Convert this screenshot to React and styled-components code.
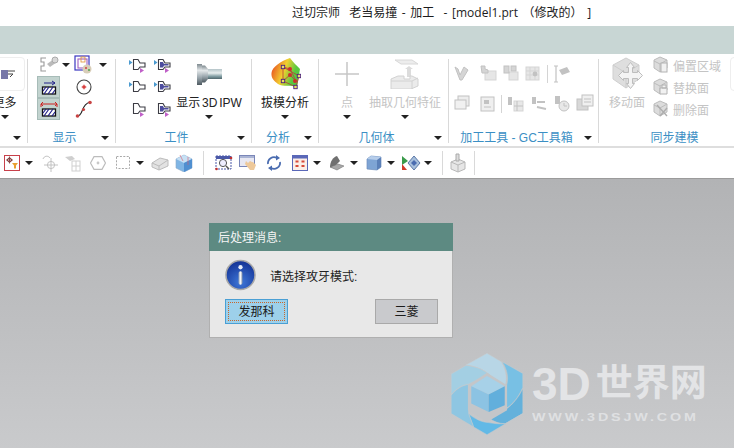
import styled, { createGlobalStyle } from "styled-components";

const GlobalStyle = createGlobalStyle`
  html, body { margin: 0; padding: 0; background: #fff; overflow: hidden; }
  body { font-family: "Liberation Sans", "Noto Sans CJK SC", sans-serif; font-size: 12px; color: #222; }
  svg { display: block; }
`;

const Page = styled.div`
  width: 734px;
  height: 448px;
  display: flex;
  flex-direction: column;
  overflow: hidden;
  position: relative;
`;

const TitleBar = styled.div`
  height: 26px;
  padding-left: 292px;
  line-height: 25px;
  white-space: pre;
  word-spacing: 1.5px;
  font-family: "Open Sans", "Noto Sans CJK SC", sans-serif;
  color: #1c1c1c;
`;

const Strip = styled.div`
  height: 28px;
  background: #c8d6d4;
`;

const Ribbon = styled.div`
  height: 92px;
  display: flex;
  overflow: hidden;
  border-bottom: 2px solid #dedede;
`;

const Group = styled.div`
  width: ${(p) => p.$w}px;
  flex: none;
  display: flex;
  flex-direction: column;
  overflow: hidden;
`;

const Divider = styled.div`
  width: 1px;
  height: 84px;
  margin-top: 5px;
  flex: none;
  background: #d9d9d9;
`;

const GroupBody = styled.div`
  height: 76px;
  display: flex;
  padding-left: ${(p) => p.$pl || 0}px;
  justify-content: ${(p) => (p.$center ? "center" : "flex-start")};
`;

const Footer = styled.div`
  height: 16px;
  display: flex;
  align-items: center;
  padding-left: ${(p) => p.$pl || 0}px;
  padding-right: 6px;
`;

const GroupLabel = styled.div`
  flex: 1;
  text-align: center;
  color: #3b8fc4;
  line-height: 16px;
  white-space: nowrap;
`;

const Caret = styled.i`
  display: block;
  flex: none;
  width: 0;
  height: 0;
  border-left: 4px solid transparent;
  border-right: 4px solid transparent;
  border-top: 4px solid #222;
`;

const CaretCell = styled.div`
  width: ${(p) => p.$w || 10}px;
  height: ${(p) => p.$h || 22}px;
  margin-left: ${(p) => p.$ml || 0}px;
  flex: none;
  display: flex;
  align-items: center;
  justify-content: center;
`;

const BigButton = styled.div`
  width: ${(p) => p.$w}px;
  flex: none;
  display: flex;
  flex-direction: column;
  align-items: center;
`;

const BigIcon = styled.div`
  height: 40px;
  display: flex;
  align-items: center;
  justify-content: center;
`;

const BigText = styled.div`
  height: 16px;
  line-height: 18px;
  white-space: nowrap;
  word-spacing: -1.5px;
  margin-left: ${(p) => p.$ml || 0}px;
  color: ${(p) => (p.$off ? "#c4c4c4" : "#222")};
`;

const StubBox = styled.div`
  width: 32px;
  height: 34px;
  box-sizing: border-box;
  margin: 3px 0 3px ${(p) => p.$ml || 0}px;
  border: 1px solid #eee;
  border-radius: 4px;
  display: flex;
  align-items: center;
  justify-content: flex-end;
  padding-right: 9px;
  flex: none;
`;

const ShowGrid = styled.div`
  display: grid;
  grid-template-columns: 23px 12px 24px 14px;
  grid-auto-rows: 22px;
  margin-left: 9px;
  height: 66px;
`;

const Cell = styled.div`
  display: flex;
  align-items: center;
  justify-content: center;
`;

const ToggleCell = styled(Cell)`
  background: #c2d3cf;
  border: 1px solid #a7bcb8;
  box-sizing: border-box;
`;

const IconGrid = styled.div`
  display: grid;
  grid-template-columns: 25px 25px;
  grid-auto-rows: 22px;
  margin-left: 9px;
  height: 66px;
`;

const ToolRows = styled.div`
  display: flex;
  flex-direction: column;
  padding-top: 5px;
`;

const ToolRow = styled.div`
  height: 30px;
  display: flex;
  align-items: center;
`;

const ToolCell = styled.div`
  width: 22px;
  flex: none;
  margin-left: ${(p) => p.$ml || 0}px;
  display: flex;
  justify-content: center;
`;

const MiniSep = styled.div`
  width: 1px;
  height: 18px;
  flex: none;
  margin-left: ${(p) => p.$ml || 0}px;
  background: #d4d4d4;
`;

const SyncList = styled.div`
  display: flex;
  flex-direction: column;
`;

const SyncRow = styled.div`
  height: 22px;
  display: flex;
  align-items: center;
  gap: 4px;
  color: #c4c4c4;
  white-space: nowrap;
`;

const Toolbar = styled.div`
  height: 30px;
  display: flex;
  align-items: center;
  border-bottom: 1px solid #9b9b9b;
  padding-left: 2px;
  flex: none;
`;

const ToolGroup = styled.div`
  display: flex;
  align-items: center;
`;

const ToolSlot = styled.div`
  width: 20px;
  flex: none;
  margin-left: ${(p) => p.$ml || 0}px;
  display: flex;
  justify-content: center;
`;

const ToolSep = styled.div`
  width: 1px;
  height: 24px;
  flex: none;
  margin-left: ${(p) => p.$ml || 0}px;
  background: #d9d9d9;
`;

const Canvas = styled.div`
  flex: 1;
  background: linear-gradient(#b2b3b5, #c9cacc);
`;

const Dialog = styled.div`
  position: absolute;
  left: 209px;
  top: 223px;
  width: 244px;
  height: 115px;
  box-sizing: border-box;
  border: 1px solid #b0b0b0;
  border-top: none;
  background: #e8e8e8;
  display: flex;
  flex-direction: column;
`;

const DialogHead = styled.div`
  height: 28px;
  margin: 0 -1px;
  padding-left: 9px;
  background: #5d8a82;
  color: #f4f4f4;
  line-height: 30px;
`;

const DialogBody = styled.div`
  display: flex;
  align-items: center;
  height: 48px;
  padding-left: 15px;
  gap: 14px;
`;

const DialogActions = styled.div`
  display: flex;
  justify-content: space-between;
  padding: 0 14px 0 15px;
`;

const DialogButton = styled.div`
  width: 63px;
  height: 25px;
  box-sizing: border-box;
  border: 1px solid ${(p) => (p.$focus ? "#4a9fd4" : "#a9a9a9")};
  background: ${(p) => (p.$focus ? "#9dd0ea" : "#c9cacd")};
  color: #1c1c1c;
  padding: 2px;
  text-align: center;
  & > span {
    display: block;
    height: 19px;
    border: 1px dotted ${(p) => (p.$focus ? "#c8662a" : "transparent")};
    box-sizing: border-box;
    line-height: 19px;
  }
`;

const Watermark = styled.div`
  position: absolute;
  left: 451px;
  top: 353px;
  display: flex;
  gap: 9px;
`;

const MarkText = styled.div`
  display: flex;
  flex-direction: column;
  color: #e3e4e6;
  width: 180px;
`;

const MarkTitle = styled.div`
  font-weight: 700;
  font-size: 37px;
  line-height: 44px;
  margin-top: 9px;
  white-space: nowrap;
  display: flex;
  align-items: center;
  gap: 5px;
  & > b {
    font-size: 46px;
    letter-spacing: 0;
  }
`;

const MarkUrl = styled.div`
  font-weight: 700;
  font-size: 11px;
  line-height: 12px;
  letter-spacing: 2.2px;
  margin-top: 5px;
  color: #dfe0e2;
  white-space: nowrap;
  transform: scaleX(1.3);
  transform-origin: left;
`;

const Ic = ({ w = 20, h = 20, vb, children }) => (
  <svg width={w} height={h} viewBox={vb || `0 0 ${w} ${h}`} fill="none">{children}</svg>
);

const Cutter = ({ fill, left, right }) => (
  <Ic w={18} h={16}>
    {left && <path d="M0 3l3.500 2.500L0 8z" fill="#4a9ad0" />}
    {right && <path d="M11 11l4 2.500-4 2.500z" fill="#c060c8" />}
    <path d="M4.500 2.500H9l2 3.500h5v4h-5l-2 2.500H4.500z" fill="#fff" stroke="#3c3c44" strokeWidth="1.100" />
    {fill && <path d="M6 5h3l1 2h4.500v1.600H10L9 10.500H6z" fill="#4d4d9e" />}
  </Ic>
);

const Screw = () => (
  <Ic>
    <path d="M7 3H2v4h3v4H2v5h5" stroke="#9a9a9a" strokeWidth="1.100" />
    <path d="M8 9l7-5 3 3-7 5z" fill="#bbb" />
    <circle cx="16" cy="5" r="3" fill="#d8d8d8" stroke="#aaa" />
  </Ic>
);

const ColorSquares = () => (
  <Ic>
    <rect x="1" y="1" width="14" height="14" stroke="#3a36c0" strokeWidth="1.200" />
    <rect x="4" y="4" width="9" height="9" stroke="#a060c0" strokeWidth="1.100" />
    <rect x="7" y="2" width="4" height="5" stroke="#e09030" strokeWidth="0.800" />
    <circle cx="13" cy="14" r="4.500" fill="#d8cdb8" />
    <circle cx="12" cy="13" r="1" fill="#d04040" />
    <circle cx="15" cy="15" r="1" fill="#50a050" />
  </Ic>
);

const CirclePoint = () => (
  <Ic w={16} h={16}>
    <circle cx="8" cy="8" r="7" fill="#fff" stroke="#444" strokeWidth="1.100" />
    <circle cx="8" cy="8" r="1.800" fill="#d94040" />
    <path d="M8 5.500v5M5.500 8h5" stroke="#d94040" strokeWidth=".7" />
  </Ic>
);

const Spline = () => (
  <Ic w={18} h={18}>
    <path d="M2 16c7 0 3-11 13-14" stroke="#222" strokeWidth="1.100" />
    <circle cx="2.500" cy="16" r="1.800" fill="#c84444" />
    <circle cx="15" cy="2.500" r="1.800" fill="#c84444" />
    <circle cx="8.500" cy="9.500" r="1.600" fill="#c84444" />
  </Ic>
);

const Hatch = ({ dbl }) => (
  <Ic w={18} h={18}>
    <rect x="2.500" y="9" width="13" height="7" fill="#fff" stroke="#111" strokeWidth="1.300" />
    <path d="M4 16l5-7M8 16l5-7M12 16l3-4M3 13l3-4" stroke="#22228a" strokeWidth="1.200" />
    {dbl ? (
      <path d="M1 4h16M1 4l2-2M1 4l2 2M17 4l-2-2M17 4l-2 2M1 4v3M17 4v3" stroke="#cc2222" strokeWidth="1" />
    ) : (
      <path d="M4 5h11M15 5l-3-2M15 5l-3 2" stroke="#22228a" strokeWidth="1" />
    )}
  </Ic>
);

const BigTool = () => (
  <svg width="25" height="21" viewBox="0 0 25 21">
    <defs>
      <linearGradient id="tg" x1="0" y1="0" x2="0" y2="1">
        <stop offset="0" stopColor="#7f8a90" />
        <stop offset=".3" stopColor="#e4e8ea" />
        <stop offset=".65" stopColor="#9aa6ad" />
        <stop offset="1" stopColor="#4e5a61" />
      </linearGradient>
      <linearGradient id="tn" x1="0" y1="0" x2="0" y2="1">
        <stop offset="0" stopColor="#b4c4c8" />
        <stop offset=".4" stopColor="#e8eeee" />
        <stop offset=".75" stopColor="#7e9aa0" />
        <stop offset="1" stopColor="#4f666c" />
      </linearGradient>
    </defs>
    <rect x="0" y="0" width="5" height="21" fill="url(#tg)" />
    <path d="M5 1.500h3l3 3.500v10l-3 3.500H5z" fill="url(#tg)" />
    <rect x="11" y="5" width="14" height="10" fill="url(#tn)" />
  </svg>
);

const DraftIcon = () => (
  <svg width="32" height="32" viewBox="0 0 32 32" fill="none">
    <defs>
      <linearGradient id="dg" x1="0" y1=".25" x2="1" y2=".6">
        <stop offset="0" stopColor="#e84a20" />
        <stop offset=".45" stopColor="#f2d030" />
        <stop offset=".8" stopColor="#58c840" />
      </linearGradient>
    </defs>
    <path d="M21 0c3 4 7 8 10 11l-3 18c-6-2-14 0-19-3-4-3-7-6-6.500-11C3 9 12 3 21 0z" fill="url(#dg)" />
    <path d="M14 9l16 9-3 11L14 23zM14 9l7 2 6 12M14 23l7-6 6 6" stroke="#b83838" strokeWidth=".8" />
    {[[21, 11], [21, 17], [26, 23]].map(([x, y]) => <circle key={x + y} cx={x} cy={y} r="2" fill="#d02c2c" />)}
    {[[14, 9], [30, 18], [14, 23], [26.5, 29]].map(([x, y]) => (
      <rect key={x + y} x={x - 1.7} y={y - 1.7} width="3.400" height="3.400" fill="#e8e060" stroke="#4a2080" strokeWidth=".9" />
    ))}
  </svg>
);

const PlusIcon = () => (
  <Ic w={24} h={24}>
    <path d="M12 0v24M0 12h24" stroke="#c6c6c6" strokeWidth="1.500" />
  </Ic>
);

const ExtractIcon = () => (
  <Ic w={30} h={30}>
    <path d="M5 1h17l6 4H11z" fill="#ededed" stroke="#d8d8d8" />
    <path d="M15 10l4-3 4 3h-2v8h-4v-8z" fill="#dcdcdc" />
    <path d="M1 20l7-3h6v3h6v-3h2l6 3v7l-7 3H1z" fill="#ebebeb" stroke="#d2d2d2" />
    <path d="M1 22h21l6-3M22 22v8" stroke="#d2d2d2" />
  </Ic>
);

const GreyBlock = ({ kind = 0 }) => {
  const a = "#d5d5d5";
  const b = "#c2c2c2";
  const shapes = [
    <path key="0" d="M2 3l3 2 2 6 4-8 4 3-6 10H7z" fill={a} stroke={b} />,
    <g key="1"><rect x="6" y="7" width="11" height="9" fill="#e6e6e6" stroke={a} /><path d="M2 2h4v3l3 1v3H3z" fill={a} stroke={b} /></g>,
    <g key="2"><rect x="8" y="8" width="9" height="8" fill="#e6e6e6" stroke={a} /><rect x="3" y="2" width="5" height="7" fill={a} stroke={b} /><rect x="10" y="2" width="5" height="5" fill={a} stroke={b} /></g>,
    <g key="3"><rect x="3" y="3" width="13" height="13" fill="#e6e6e6" stroke={a} /><path d="M3 7h13M3 11h13M7 3v13M12 3v13" stroke={a} /><circle cx="12" cy="10" r="2.400" fill={b} /></g>,
    <g key="4"><rect x="5" y="2" width="11" height="10" fill="#ededed" stroke={b} /><rect x="2" y="6" width="11" height="9" fill="#f1f1f1" stroke={b} /></g>,
    <g key="5"><rect x="3" y="3" width="13" height="14" fill="#efefef" stroke={b} /><rect x="6" y="6" width="5" height="4" fill={b} /><path d="M6 13h7" stroke={b} /></g>,
    <g key="6"><path d="M2 3h4v8H2z" fill={b} /><rect x="8" y="7" width="9" height="10" fill="#e8e8e8" stroke={a} /><path d="M11 7v10M8 12h9" stroke={b} /></g>,
    <g key="7"><path d="M3 3h4v7H3z" fill={b} /><path d="M8 8h8M8 13l9 2" stroke={b} strokeWidth="2" /></g>,
    <g key="8"><path d="M3 2h5v8H3z" fill={b} /><circle cx="12" cy="12" r="5" fill="#e8e8e8" stroke={b} /><path d="M12 9v3h3" stroke={b} /></g>,
    <g key="9"><rect x="2" y="5" width="11" height="11" fill="#d8d8d8" stroke={b} /><rect x="7" y="1" width="11" height="11" fill="#f0f0f0" stroke={b} /><path d="M9 5h7M9 8h7" stroke={b} /></g>,
    <g key="10"><path d="M4 2v16M2 2h4M2 18h4" stroke={b} strokeWidth="1.200" /><path d="M7 6l8-3 3 5-8 3z" fill={b} /></g>,
  ];
  return <Ic>{shapes[kind]}</Ic>;
};

const MoveFace = () => (
  <Ic w={34} h={34}>
    <path d="M16 1l13 7v14l-13 9L3 22V8z" fill="#dedede" stroke="#cfcfcf" />
    <path d="M3 8l13 8 13-8M16 16v15" stroke="#cdcdcd" />
    <path d="M21 6l4 5h-2v5h5v-2l5 5-5 5v-2h-5v5h2l-4 5-4-5h2v-5h-5v2l-5-5 5-5v2h5v-5h-2z" fill="#f4f4f4" stroke="#bdbdbd" transform="translate(-.5 -.5)" />
  </Ic>
);

const SyncIcon = ({ mark }) => (
  <Ic w={16} h={18}>
    <path d="M7 1l7 3v8l-7 4-6-4V4z" fill="#dcdcdc" stroke="#bcbcbc" />
    <path d="M1 5l6 3 7-4M7 8v8" stroke="#bcbcbc" />
    {mark === 0 && <rect x="8" y="7" width="6" height="9" fill="#f1f1f1" stroke="#b2b2b2" />}
    {mark === 1 && <path d="M7 10h7v6H7zM9 7h4v3H9z" fill="#f1f1f1" stroke="#b2b2b2" />}
    {mark === 2 && <path d="M4 5l10 11M14 8L7 16" stroke="#adadad" strokeWidth="1.400" />}
  </Ic>
);

const RedProbe = () => (
  <Ic w={16} h={16}>
    <rect x=".5" y=".5" width="15" height="15" fill="#fff" stroke="#c8404a" />
    <circle cx="5.500" cy="5" r="2" stroke="#7a3030" />
    <path d="M5.500 1.500v7M2 5h7" stroke="#7a3030" strokeWidth=".8" />
    <path d="M8 8h6l-2 2.500v3h-2v-3z" fill="#e8a030" />
  </Ic>
);

const grey = "#c2c2c2";
const Crosshair = () => (
  <Ic w={20} h={18}>
    <path d="M3 5c1-3 5-4 7-1" stroke={grey} />
    <circle cx="11" cy="11" r="3.600" stroke={grey} />
    <path d="M11 4v14M4 11h14" stroke={grey} />
  </Ic>
);
const Bolts = () => (
  <Ic w={20} h={18}>
    <path d="M2 3l7-1 3 3-5 2z" fill="#cfcfcf" />
    <rect x="9" y="7" width="8" height="10" stroke="#d0d0d0" />
    <path d="M13 7v10M9 12h8" stroke="#d0d0d0" />
  </Ic>
);
const Hexa = () => (
  <Ic w={16} h={14}>
    <path d="M4 .7h8L15.500 7 12 13.300H4L.5 7z" stroke="#bcbcbc" strokeWidth="1.200" />
    <circle cx="8" cy="7" r="1.400" fill="#c8c8c8" />
  </Ic>
);
const DashBox = () => (
  <Ic w={16} h={16}>
    <rect x="1.500" y="1.500" width="13" height="12" stroke="#a8a8a8" strokeDasharray="2 1.400" />
  </Ic>
);
const GreyBox = () => (
  <Ic w={18} h={16}>
    <path d="M1 8l8-5 8 2v6l-9 4-7-3z" fill="#e2e2e2" stroke="#bcbcbc" />
    <path d="M1 8l7 3 9-6M8 11v4" stroke="#bcbcbc" />
  </Ic>
);
const BlueCube = () => (
  <Ic w={18} h={18}>
    <path d="M1 5l8-4 8 4v9l-8 4-8-4z" fill="#7fb5e4" stroke="#8aa8c8" strokeWidth=".6" />
    <path d="M1 5l8 4 8-4-8-4z" fill="#c6e0f4" />
    <path d="M9 9v9l8-4V5z" fill="#4f8fd0" />
    <path d="M5 1l3 6M13 3v8" stroke="#d85c6c" strokeWidth=".6" />
  </Ic>
);
const ZoomFrame = () => (
  <Ic w={18} h={16}>
    <rect x="1" y="1" width="15" height="3" fill="#4a58a8" />
    <rect x="1" y="1" width="15" height="13" stroke="#4a58a8" strokeDasharray="2 1" />
    <circle cx="8" cy="8" r="3.600" stroke="#555" fill="#eef" />
    <path d="M11 11l3 3" stroke="#555" strokeWidth="1.400" />
    <circle cx="1.500" cy="14" r="1.300" fill="#c03030" />
    <circle cx="16" cy="3" r="1.300" fill="#c03030" />
  </Ic>
);
const HandFrame = () => (
  <Ic w={18} h={16}>
    <rect x=".5" y=".5" width="15" height="11" fill="#e8e8f2" stroke="#7a86b8" />
    <rect x="1" y="1" width="14" height="2" fill="#aab4d4" />
    <path d="M7 6l2 2 2-2 2 1 1 0 3 3-2 5H11L6 9z" fill="#eec99a" />
  </Ic>
);
const Refresh = () => (
  <Ic w={16} h={16}>
    <path d="M2 9a6 6 0 0 1 9-6" stroke="#4a6cb0" strokeWidth="1.800" />
    <path d="M14 7a6 6 0 0 1-9 6" stroke="#4a6cb0" strokeWidth="1.800" />
    <path d="M10 0l4 3-4 2.500zM6 10.500l-4 2.500 4 3z" fill="#4a6cb0" />
  </Ic>
);
const ViewGrid = () => (
  <Ic w={16} h={16}>
    <rect x=".5" y=".5" width="15" height="15" fill="#fbeee8" stroke="#5a68b8" />
    <rect x="1" y="1" width="14" height="2.500" fill="#5a68b8" />
    <path d="M3.500 5.500h3v2h-3zM9.500 5.500h3v2h-3zM3.500 10h3v2h-3zM9.500 10h3v2h-3z" fill="#d84a3a" />
  </Ic>
);
const Scanner = () => (
  <Ic w={16} h={16}>
    <path d="M1 12c0-5 3-10 7-11l3 5-7 7z" fill="#707070" />
    <path d="M1 12l8-3 6 2-7 4z" fill="#a8a8a8" stroke="#666" strokeWidth=".5" />
  </Ic>
);
const SolidBox = () => (
  <Ic w={16} h={16}>
    <path d="M1 4l4-3 10 1v10l-4 3-10-1z" fill="#7ea4d4" stroke="#6d8ebc" strokeWidth=".7" />
    <path d="M11 4v11l4-3V2z" fill="#5b80b8" />
    <path d="M1 4l10 1 4-3-10-1z" fill="#b6cdea" />
  </Ic>
);
const Diamonds = () => (
  <Ic w={20} h={16}>
    <path d="M1 1l6 5-6 4z" fill="#3a9a4a" />
    <path d="M1 9l5 6H1z" fill="#d03a2a" />
    <path d="M13 1l6 7-6 7-6-7z" fill="#a8c0dc" stroke="#5a78a8" />
    <path d="M10 8l3-3 3 3-3 3z" fill="#4a6cb0" />
  </Ic>
);
const GreyTool = () => (
  <Ic w={18} h={20}>
    <path d="M2 9l7-3 7 3v7l-7 3-7-3z" fill="#e6e6e6" stroke="#b8b8b8" />
    <path d="M2 9l7 3 7-3M9 12v7" stroke="#b8b8b8" />
    <path d="M7 1h3v7H7z" fill="#ddd" stroke="#aaa" />
  </Ic>
);

const InfoIcon = () => (
  <svg width="31" height="32" viewBox="0 0 32 32" fill="none">
    <defs>
      <radialGradient id="ig" cx=".5" cy=".75" r=".8">
        <stop offset="0" stopColor="#3f77d8" />
        <stop offset="1" stopColor="#0f2c8f" />
      </radialGradient>
      <linearGradient id="ib" x1="0" y1="0" x2="1" y2="0">
        <stop offset="0" stopColor="#9aa6b8" />
        <stop offset=".5" stopColor="#f4f6fa" />
        <stop offset="1" stopColor="#8a96a8" />
      </linearGradient>
    </defs>
    <circle cx="16" cy="16" r="15" fill="url(#ig)" stroke="#a8a8a8" strokeWidth="1.600" />
    <circle cx="16" cy="8" r="2.200" fill="#e8eef8" />
    <rect x="14" y="12" width="4" height="14" rx="2" fill="url(#ib)" />
  </svg>
);

const LogoMark = () => (
  <svg width="72" height="82" viewBox="18 9 214 245" fill="none" stroke="#c8cbcd" strokeWidth="1.500">
    <path d="M62 45L125 10l43 25c17 30 17 55 10 77l-48-40C110 55 85 47 62 45z" fill="#b8d6e6" />
    <path d="M170 35l62 35v42c-12 28-30 50-50 63v-63c8-25 6-50-12-77z" fill="#78c0e4" />
    <path d="M232 115v75l-52 30c-20 0-36-6-50-18l52-25c20-14 38-36 50-62z" fill="#64b1db" />
    <path d="M70 190c18 16 40 26 60 27 20 4 40 4 50 3l52-30-107 63-40-23z" fill="#62b9e6" />
    <path d="M18 190v-55c15-18 32-30 52-32v87l15 40z" fill="#8ec6e2" />
    <path d="M18 72l44-26c24 2 50 10 68 26l-60 30c-20 2-37 14-52 32z" fill="#a3cfe3" />
    <path d="M125 68l60 37v75l-60 35-57-35v-75z" fill="#c4c6c9" stroke="none" />
    <path d="M125 78l53 30-48 25-52-25z" fill="#a7d1e8" stroke="none" />
    <path d="M78 108l52 25v52l-52-25z" fill="#8cc3e3" stroke="none" />
    <path d="M130 133l48-25v57l-48 20z" fill="#62afdc" stroke="none" />
  </svg>
);

const leftTools = [
  { C: RedProbe, caret: true },
  { C: Crosshair, ml: 6 },
  { C: Bolts, ml: 3 },
  { C: Hexa, ml: 5 },
  { C: DashBox, ml: 5, caret: true },
  { C: GreyBox, ml: 5 },
  { C: BlueCube, ml: 4 },
];

const viewTools = [
  { C: ZoomFrame, ml: 10 },
  { C: HandFrame, ml: 4 },
  { C: Refresh, ml: 6 },
  { C: ViewGrid, ml: 6, caret: true },
  { C: Scanner, ml: 5, caret: true },
  { C: SolidBox, ml: 5, caret: true },
  { C: Diamonds, ml: 5, caret: true },
];

const Tools = ({ items }) => (
  <ToolGroup>
    {items.flatMap(({ C, ml, caret }, i) => [
      <ToolSlot key={i} $ml={ml}><C /></ToolSlot>,
      caret && <CaretCell key={`c${i}`} $ml={2}><Caret /></CaretCell>,
    ])}
  </ToolGroup>
);

export default function App() {
  return (
    <Page>
      <GlobalStyle />
      <TitleBar>{"过切宗师  老当易撞 - 加工  - [model1.prt （修改的） ]"}</TitleBar>
      <Strip />
      <Ribbon>
        <Group $w={27}>
          <GroupBody>
            <BigButton $w={27}>
              <StubBox $ml={-10}>
                <Ic w={14} h={14}>
                  <path d="M0 3h7v9H0z" fill="#7878a8" />
                  <path d="M7 4h7M7 7h5l-3 3" stroke="#444" />
                </Ic>
              </StubBox>
              <BigText $ml={-18}>更多</BigText>
              <CaretCell $h={14} $ml={-17}><Caret /></CaretCell>
            </BigButton>
          </GroupBody>
          <Footer>
            <GroupLabel />
            <Caret />
          </Footer>
        </Group>
        <Divider />
        <Group $w={87}>
          <GroupBody>
            <ShowGrid>
              <Cell><Screw /></Cell>
              <CaretCell $w={12}><Caret /></CaretCell>
              <Cell><ColorSquares /></Cell>
              <CaretCell $w={14}><Caret /></CaretCell>
              <ToggleCell><Hatch /></ToggleCell>
              <span />
              <Cell><CirclePoint /></Cell>
              <span />
              <ToggleCell><Hatch dbl /></ToggleCell>
              <span />
              <Cell><Spline /></Cell>
            </ShowGrid>
          </GroupBody>
          <Footer><GroupLabel>显示</GroupLabel><Caret /></Footer>
        </Group>
        <Divider />
        <Group $w={135}>
          <GroupBody>
            <IconGrid>
              <Cell><Cutter left right /></Cell>
              <Cell><Cutter fill left right /></Cell>
              <Cell><Cutter left /></Cell>
              <Cell><Cutter fill left /></Cell>
              <Cell><Cutter right /></Cell>
              <Cell><Cutter fill right /></Cell>
            </IconGrid>
            <BigButton $w={68}>
              <BigIcon><BigTool /></BigIcon>
              <BigText>显示 3D IPW</BigText>
              <CaretCell $h={14}><Caret /></CaretCell>
            </BigButton>
          </GroupBody>
          <Footer><GroupLabel>工件</GroupLabel><Caret /></Footer>
        </Group>
        <Divider />
        <Group $w={66}>
          <GroupBody $center>
            <BigButton $w={66}>
              <BigIcon><DraftIcon /></BigIcon>
              <BigText>拔模分析</BigText>
              <CaretCell $h={14}><Caret /></CaretCell>
            </BigButton>
          </GroupBody>
          <Footer><GroupLabel>分析</GroupLabel><Caret /></Footer>
        </Group>
        <Divider />
        <Group $w={129}>
          <GroupBody $pl={3}>
            <BigButton $w={50}>
              <BigIcon><PlusIcon /></BigIcon>
              <BigText $off>点</BigText>
              <CaretCell $h={14}><Caret /></CaretCell>
            </BigButton>
            <BigButton $w={66}>
              <BigIcon><ExtractIcon /></BigIcon>
              <BigText $off>抽取几何特征</BigText>
              <CaretCell $h={14}><Caret /></CaretCell>
            </BigButton>
          </GroupBody>
          <Footer><GroupLabel>几何体</GroupLabel><Caret /></Footer>
        </Group>
        <Divider />
        <Group $w={149}>
          <GroupBody $pl={3}>
            <ToolRows>
              <ToolRow>
                <ToolCell><GreyBlock kind={0} /></ToolCell>
                <ToolCell $ml={4}><GreyBlock kind={1} /></ToolCell>
                <ToolCell><GreyBlock kind={2} /></ToolCell>
                <ToolCell><GreyBlock kind={3} /></ToolCell>
                <MiniSep $ml={3} />
                <ToolCell $ml={3}><GreyBlock kind={10} /></ToolCell>
              </ToolRow>
              <ToolRow>
                <ToolCell><GreyBlock kind={4} /></ToolCell>
                <ToolCell $ml={3}><GreyBlock kind={5} /></ToolCell>
                <MiniSep $ml={2} />
                <ToolCell $ml={3}><GreyBlock kind={6} /></ToolCell>
                <ToolCell $ml={1}><GreyBlock kind={7} /></ToolCell>
                <ToolCell $ml={1}><GreyBlock kind={8} /></ToolCell>
                <ToolCell $ml={1}><GreyBlock kind={9} /></ToolCell>
              </ToolRow>
            </ToolRows>
          </GroupBody>
          <Footer><GroupLabel>加工工具 - GC工具箱</GroupLabel><Caret /></Footer>
        </Group>
        <Divider />
        <Group $w={131}>
          <GroupBody $pl={2}>
            <BigButton $w={52}>
              <BigIcon><MoveFace /></BigIcon>
              <BigText $off>移动面</BigText>
            </BigButton>
            <SyncList>
              <SyncRow><SyncIcon mark={0} />偏置区域</SyncRow>
              <SyncRow><SyncIcon mark={1} />替换面</SyncRow>
              <SyncRow><SyncIcon mark={2} />删除面</SyncRow>
            </SyncList>
          </GroupBody>
          <Footer $pl={26}><GroupLabel>同步建模</GroupLabel></Footer>
        </Group>
        <StubBox />
      </Ribbon>
      <Toolbar>
        <Tools items={leftTools} />
        <ToolSep $ml={9} />
        <Tools items={viewTools} />
        <ToolSep $ml={9} />
        <ToolSlot $ml={5}><GreyTool /></ToolSlot>
        <ToolSep $ml={6} />
      </Toolbar>
      <Canvas />
      <Dialog>
        <DialogHead>后处理消息:</DialogHead>
        <DialogBody>
          <InfoIcon />
          <span>请选择攻牙模式:</span>
        </DialogBody>
        <DialogActions>
          <DialogButton $focus><span>发那科</span></DialogButton>
          <DialogButton><span>三菱</span></DialogButton>
        </DialogActions>
      </Dialog>
      <Watermark>
        <LogoMark />
        <MarkText>
          <MarkTitle><b>3D</b>世界网</MarkTitle>
          <MarkUrl>WWW.3DSJW.COM</MarkUrl>
        </MarkText>
      </Watermark>
    </Page>
  );
}
